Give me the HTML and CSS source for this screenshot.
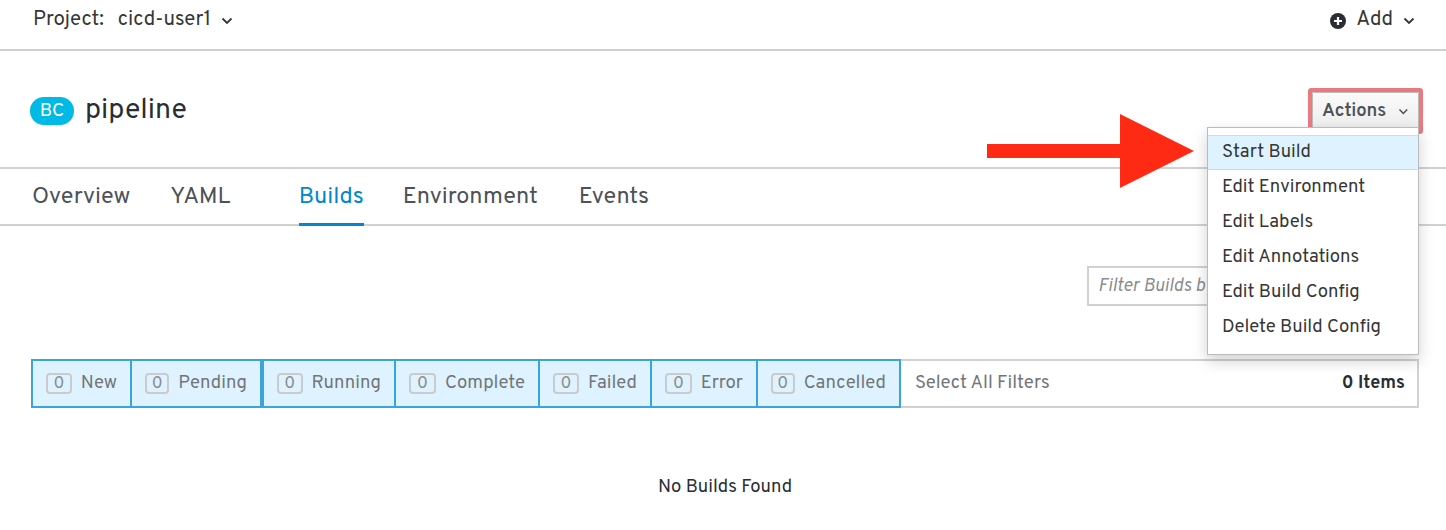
FILE: index.html
```html
<!DOCTYPE html>
<html>
<head>
<meta charset="utf-8">
<link rel="stylesheet" href="styles.css">
</head>
<body>
<header class="topbar">
  <div class="project">
    <span class="project-label">Project:</span>
    <span class="project-name">cicd-user1</span>
    <svg class="chev" width="12" height="8" viewBox="0 0 12 8"><path d="M1.5 1.5 L6 6 L10.5 1.5" fill="none" stroke="#363636" stroke-width="1.8"/></svg>
  </div>
  <div class="add">
    <svg class="plus" width="16" height="16" viewBox="0 0 16 16"><circle cx="8" cy="8" r="8" fill="#292e34"/><path d="M8 4v8M4 8h8" stroke="#fff" stroke-width="2.2"/></svg>
    <span>Add</span>
    <svg class="chev" width="12" height="8" viewBox="0 0 12 8"><path d="M1.5 1.5 L6 6 L10.5 1.5" fill="none" stroke="#363636" stroke-width="1.8"/></svg>
  </div>
</header>

<section class="title-row">
  <div class="title">
    <span class="badge">BC</span>
    <h1>pipeline</h1>
  </div>
  <div class="actions-wrap">
    <button class="actions">Actions
      <svg class="chev-sm" width="11" height="7" viewBox="0 0 11 7"><path d="M1.5 1.5 L5.5 5.5 L9.5 1.5" fill="none" stroke="#4d5258" stroke-width="1.6"/></svg>
    </button>
    <ul class="menu">
      <li class="active">Start Build</li>
      <li>Edit Environment</li>
      <li>Edit Labels</li>
      <li>Edit Annotations</li>
      <li>Edit Build Config</li>
      <li>Delete Build Config</li>
    </ul>
    <svg class="arrow" width="208" height="76" viewBox="0 0 208 76"><path d="M0 30 H133 V0 L207 37 L133 74 V44 H0 Z" fill="#ff2a14"/></svg>
  </div>
</section>

<nav class="tabs">
  <span class="tab t-overview">Overview</span>
  <span class="tab t-yaml">YAML</span>
  <span class="tab t-builds current">Builds</span>
  <span class="tab t-env">Environment</span>
  <span class="tab">Events</span>
</nav>

<main class="content">
  <div class="filter-line">
    <div class="filter-input">Filter Builds by name</div>
  </div>
  <div class="status-row">
    <div class="status-buttons">
      <span class="sbtn w-new"><i>0</i>New</span>
      <span class="sbtn w-pending"><i>0</i>Pending</span>
      <span class="sbtn w-running"><i>0</i>Running</span>
      <span class="sbtn w-complete"><i>0</i>Complete</span>
      <span class="sbtn w-failed"><i>0</i>Failed</span>
      <span class="sbtn w-error"><i>0</i>Error</span>
      <span class="sbtn w-cancelled"><i>0</i>Cancelled</span>
    </div>
    <span class="select-all">Select All Filters</span>
    <span class="count">0 Items</span>
  </div>
  <p class="empty">No Builds Found</p>
</main>
</body>
</html>
```

FILE: styles.css
```css
* { box-sizing: border-box; }
body {
  margin: 0;
  background: #fff;
  font-family: "Overpass", "Open Sans", "Liberation Sans", sans-serif;
  color: #363636;
}
.topbar {
  height: 51px;
  border-bottom: 2px solid #d1d1d1;
  display: flex;
  justify-content: space-between;
  align-items: flex-start;
  padding: 7px 31px 0 33px;
  font-size: 20.5px;
  line-height: 27px;
}
.project { display: flex; align-items: center; }
.project-label { margin-right: 14px; }
.chev { margin-left: 10px; }
.add { display: flex; align-items: center; }
.plus { margin-right: 10px; }

.title-row {
  height: 118px;
  border-bottom: 2px solid #d1d1d1;
  display: flex;
  justify-content: space-between;
  align-items: flex-start;
  padding: 0 27px 0 30px;
}
.title { display: flex; align-items: center; margin-top: 43px; }
.badge {
  background: #00b9e4;
  color: #fff;
  border-radius: 14px;
  width: 44px;
  height: 28px;
  font-size: 19px;
  line-height: 29px;
  text-align: center;
  margin-right: 11px;
}
h1 {
  margin: 0;
  font-weight: 400;
  font-size: 28.5px;
  color: #292e34;
  line-height: 34px;
}
.actions-wrap { position: relative; margin-top: 41px; }
.actions {
  display: flex;
  align-items: center;
  height: 38px;
  width: 107px;
  padding: 0 9px;
  background: linear-gradient(#fafafa, #ededed);
  border: 1px solid #bbb;
  border-radius: 1px;
  box-shadow: 0 0 0 4px #ea7a80;
  font-family: inherit;
  font-weight: 600;
  font-size: 18.5px;
  color: #4d5258;
}
.chev-sm { margin-left: 12px; }
.menu {
  position: absolute;
  top: 35px;
  right: 0;
  width: 212px;
  margin: 0;
  padding: 7px 0 9px;
  list-style: none;
  background: #fff;
  border: 1px solid #bbb;
  box-shadow: 0 6px 14px rgba(0,0,0,0.18);
  z-index: 5;
}
.menu li {
  height: 35px;
  line-height: 34px;
  padding: 0 14px;
  font-size: 18.5px;
  color: #363636;
  border-top: 1px solid transparent;
  border-bottom: 1px solid transparent;
}
.menu li.active {
  background: #def3ff;
  border-color: #bee1f4;
}
.arrow {
  position: absolute;
  left: -325px;
  top: 22px;
  z-index: 6;
}

.tabs {
  height: 57px;
  border-bottom: 2px solid #d1d1d1;
  display: flex;
  padding-left: 32px;
  font-size: 23.5px;
  color: #4d5258;
}
.tab {
  line-height: 56px;
  height: 57px;
  white-space: nowrap;
}
.t-overview { margin-right: 40px; }
.t-yaml { margin-right: 68px; }
.t-builds { margin-right: 39px; }
.t-env { margin-right: 41px; }
.tab.current {
  color: #0088ce;
  border-bottom: 3px solid #0088ce;
  height: 57px;
  margin-bottom: -2px;
}

.content { padding: 0 27px 0 31px; }
.filter-line {
  display: flex;
  justify-content: flex-end;
  padding-top: 40px;
}
.filter-input {
  width: 332px;
  height: 40px;
  border: 2px solid #d1d1d1;
  padding: 0 9px;
  font-style: italic;
  font-size: 18px;
  line-height: 37px;
  color: #8b8d8f;
  white-space: nowrap;
  overflow: hidden;
}
.status-row {
  margin-top: 53px;
  height: 49px;
  border: 2px solid #d1d1d1;
  border-left: none;
  display: flex;
  align-items: center;
}
.status-buttons { display: flex; height: 49px; margin-top: -2px; margin-bottom: -2px; }
.sbtn {
  display: flex;
  align-items: center;
  background: #def3ff;
  border: 2px solid #39a5dc;
  border-left-width: 1px;
  border-right-width: 1px;
  padding: 0 13px;
  font-size: 18.5px;
  color: #72767b;
  white-space: nowrap;
}
.sbtn:first-child { border-left-width: 2px; }
.sbtn:last-child { border-right-width: 2px; }
.sbtn i {
  font-style: normal;
  border: 2px solid #cbcbcb;
  border-radius: 4px;
  width: 27px;
  text-align: center;
  line-height: 17px;
  height: 21px;
  padding-top: 1px;
  font-size: 17px;
  color: #8b8d8f;
  margin-right: 9px;
}
.w-new { width: 100px; }
.w-pending { width: 131px; border-right-width: 2px; }
.w-running { width: 133px; border-left-width: 2px; }
.w-complete { width: 144px; }
.w-failed { width: 112px; }
.w-error { width: 106px; }
.w-cancelled { width: 144px; }
.select-all {
  margin-left: 14px;
  font-size: 18.5px;
  color: #72767b;
  flex: 1;
}
.count {
  font-weight: 700;
  font-size: 18px;
  color: #292e34;
  margin-right: 12px;
}
.empty {
  margin: 68px 0 0;
  text-align: center;
  font-size: 18.5px;
  color: #292e34;
}
```
